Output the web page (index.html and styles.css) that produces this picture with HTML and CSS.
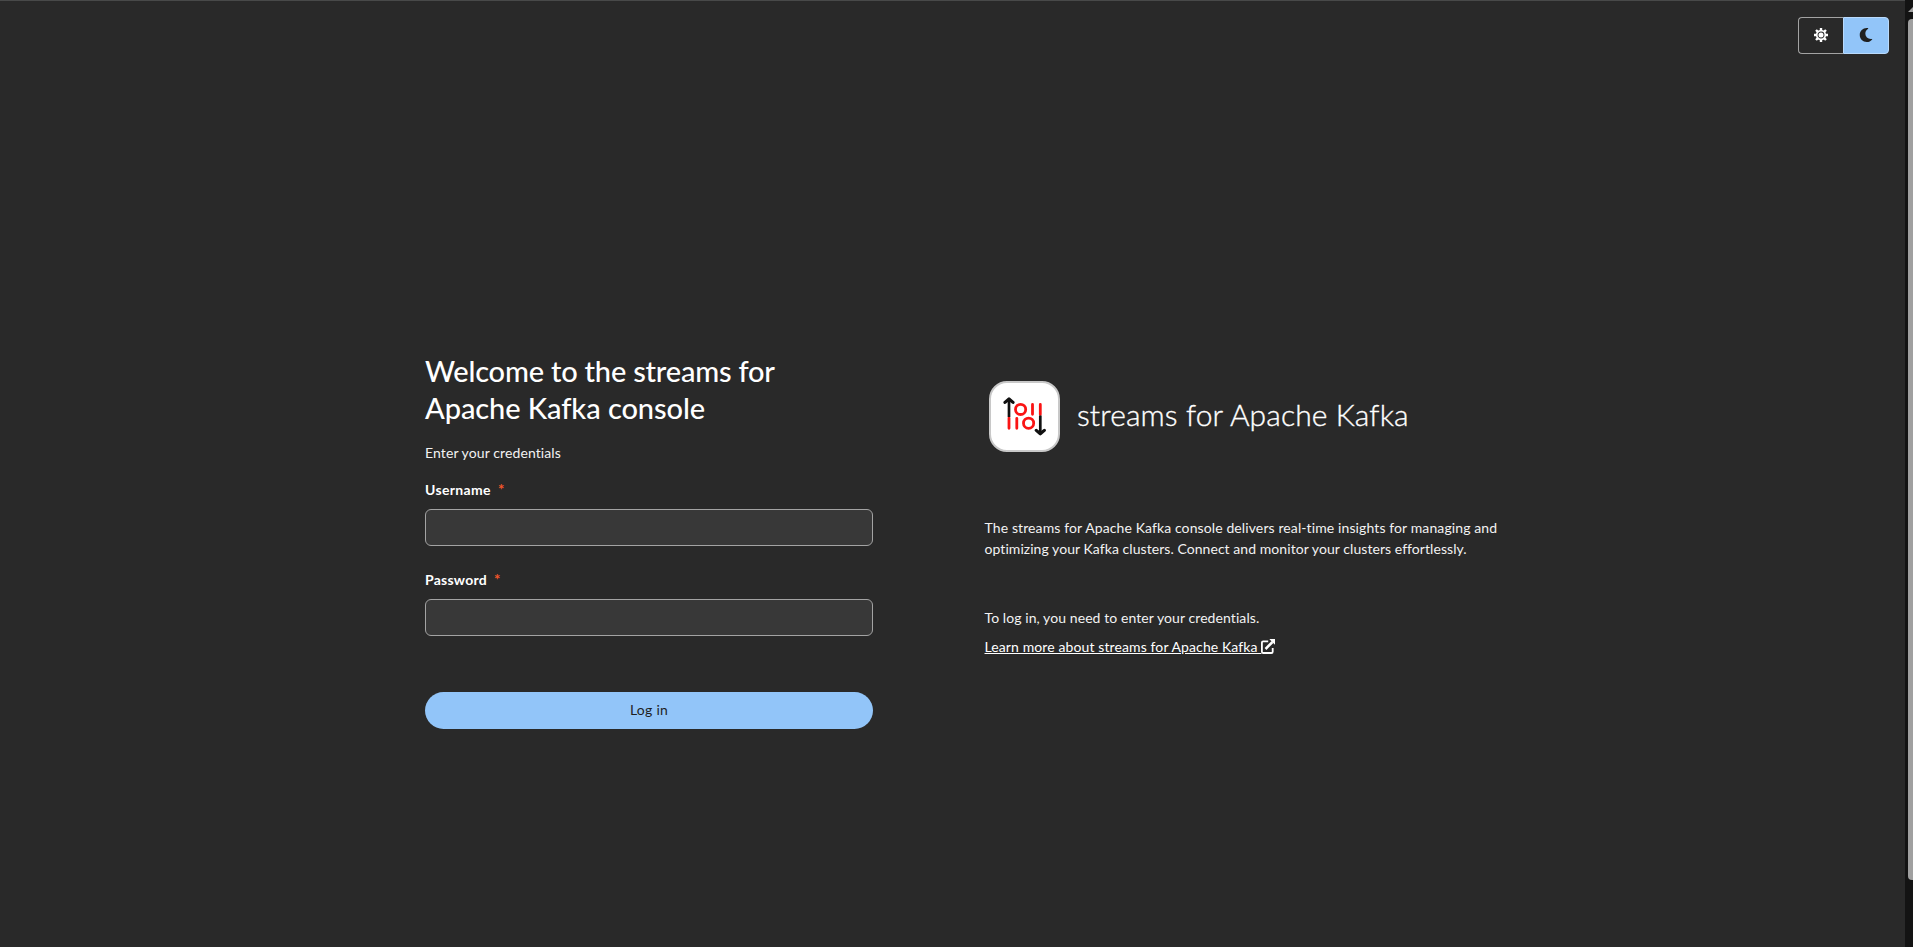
FILE: index.html
```html
<!DOCTYPE html>
<html lang="en">
<head>
<meta charset="utf-8">
<title>streams for Apache Kafka console</title>
<link rel="stylesheet" href="styles.css">
</head>
<body>
<div class="page">
  <header class="toolbar">
    <div class="theme-toggle">
      <button class="toggle-item" aria-label="Light theme">
        <svg width="14" height="14" viewBox="0 0 14 14" fill="none">
          <path stroke="#fff" stroke-width="2.4" d="M7 0v2.600M7 11.400V14M0 7h2.600M11.400 7H14M2 2l1.900 1.900M10.100 10.100L12 12M2 12l1.900-1.900M10.100 3.900L12 2"/>
          <circle cx="7" cy="7" r="4.300" stroke="#fff" stroke-width="1.700"/>
          <circle cx="7" cy="7" r="2.500" fill="#fff"/>
        </svg>
      </button>
      <button class="toggle-item selected" aria-label="Dark theme">
        <svg width="14" height="14" viewBox="0 0 512 512" fill="#1f1f1f">
          <path d="M283.211 512c78.962 0 151.079-35.925 198.857-94.792 7.068-8.708-.639-21.43-11.562-19.35-124.203 23.654-238.262-71.576-238.262-196.954 0-72.222 38.662-138.635 101.498-174.394 9.686-5.512 7.25-20.197-3.756-22.23A258.156 258.156 0 0 0 283.211 0c-141.309 0-256 114.511-256 256 0 141.309 114.511 256 256 256z"/>
        </svg>
      </button>
    </div>
  </header>
  <main class="login">
    <form class="login-form">
      <h1 class="title"><span class="title-first">Welcome to the streams for</span><br><span class="title-second">Apache Kafka console</span></h1>
      <p class="hint">Enter your credentials</p>
      <label class="label label-user" for="user">Username<span class="required">*</span></label>
      <input class="field" id="user" type="text">
      <label class="label label-pass" for="pass">Password<span class="required">*</span></label>
      <input class="field" id="pass" type="password">
      <button class="submit" type="button">Log in</button>
    </form>
    <section class="about">
      <div class="brand">
        <svg class="logo" width="71" height="71" viewBox="0 0 71 71" fill="none">
          <rect x="1" y="1" width="69" height="69" rx="17" fill="#fff" stroke="#c8c8c8" stroke-width="2"/>
          <g stroke="#fa1414" stroke-width="2.800" stroke-linecap="round">
            <path d="M20 37V47.300M27.800 37.300v10M43.500 23.500v9.800M51.300 23.500v10"/>
            <circle cx="31.600" cy="28.400" r="5.100"/>
            <circle cx="39.600" cy="42.200" r="5.100"/>
          </g>
          <g stroke="#111" stroke-width="2.700">
            <path d="M20 36V18.500M51.300 34.500v17.500"/>
            <path stroke-width="3.200" stroke-linecap="round" stroke-linejoin="round" d="M16 21.400L20 18l4 3.400M47.300 49.400l4 3.400 4-3.400"/>
          </g>
        </svg>
        <span class="brand-name">streams for Apache Kafka</span>
      </div>
      <p class="description"><span class="desc-first">The streams for Apache Kafka console delivers real-time insights for managing and</span><br><span class="desc-second">optimizing your Kafka clusters. Connect and monitor your clusters effortlessly.</span></p>
      <p class="instructions">To log in, you need to enter your credentials.</p>
      <a class="learn-more" href="#"><span class="learn-text">Learn more about streams for Apache Kafka&nbsp;</span><svg class="external" width="14" height="15" viewBox="0 0 14 15" fill="none" stroke="#fff">
          <path stroke-width="1.800" d="M7.200 2.300H2.200Q.900 2.300.900 3.600v9.100Q.900 14 2.200 14h8.200q1.300 0 1.300-1.300V9"/>
          <path stroke-width="2.500" d="M4.500 10L11.500 3"/>
          <path fill="#fff" stroke="none" d="M8.300 0H14v5.700z"/>
        </svg></a>
    </section>
  </main>
</div>
<div class="scrollbar">
  <svg class="scroll-arrow" width="5" height="19" viewBox="0 0 5 19"><path d="M0 12L5 7v5z" fill="#a0a0a0"/></svg>
  <div class="thumb"></div>
</div>
</body>
</html>
```
FILE: styles.css
```css
* { box-sizing: border-box; }

body {
  margin: 0;
  height: 947px;
  display: flex;
  overflow: hidden;
  background: #292929;
  color: #f2f2f2;
  font: 14px/21px Lato, "Liberation Sans", sans-serif;
}

h1, p { margin: 0; }
button { font: inherit; border: 0; padding: 0; }

.page { flex: 1; border-top: 1px solid #484949; }

.toolbar {
  display: flex;
  justify-content: flex-end;
  padding: 16px 16px 0 0;
}

.theme-toggle {
  display: flex;
  width: 91px;
  height: 37px;
}

.toggle-item {
  display: flex;
  align-items: center;
  justify-content: center;
  width: 45px;
  padding-bottom: 1px;
  border: 1px solid #a3a3a3;
  border-right: 0;
  border-radius: 4px 0 0 4px;
  background: transparent;
}

.toggle-item.selected {
  width: 46px;
  border: 1px solid #b9dafc;
  border-radius: 0 4px 4px 0;
  background: #92c5f9;
}

.login {
  display: grid;
  grid-template-columns: 448px 530px;
  column-gap: 111px;
  padding: 298px 0 0 425px;
}

.login-form { display: flex; flex-direction: column; }

.title {
  color: #fff;
  font-size: 29px;
  font-weight: 500;
  line-height: 37px;
  white-space: nowrap;
}

.title-first { letter-spacing: -0.2px; }
.title-second { letter-spacing: -0.07px; }

.hint { margin-top: 16px; letter-spacing: 0.1px; }

.label {
  display: flex;
  color: #fff;
  font-weight: 700;
  letter-spacing: 0.35px;
}

.label-user { margin-top: 16px; }
.label-pass { margin-top: 23px; letter-spacing: 0.25px; }

.required {
  margin-left: 7px;
  color: #f4562a;
  font-size: 15px;
}

.field {
  height: 37px;
  margin-top: 9px;
  border: 1px solid #a3a3a3;
  border-radius: 6px;
  background: #383838;
  color: #fff;
}

.submit {
  height: 37px;
  margin-top: 56px;
  padding-bottom: 2px;
  border-radius: 19px;
  background: #92c5f9;
  color: #1f1f1f;
  letter-spacing: 0.25px;
}

.about { padding-top: 29px; white-space: nowrap; }

.brand {
  display: flex;
  align-items: center;
  padding-left: 5px;
}

.brand-name {
  margin-left: 17px;
  padding-bottom: 6px;
  color: #fff;
  font-size: 30px;
  font-weight: 300;
  line-height: 40px;
  letter-spacing: 0.12px;
  -webkit-text-stroke: 0.35px #fff;
}

.description { margin-top: 65px; padding-left: 0.5px; }
.desc-first { letter-spacing: 0.11px; }
.desc-second { letter-spacing: 0.06px; }

.instructions { margin-top: 48px; padding-left: 0.5px; letter-spacing: 0.08px; }

.learn-more {
  display: flex;
  align-items: flex-start;
  margin-top: 8px;
  padding-left: 0.5px;
  color: #fff;
  text-decoration: none;
}

.learn-text {
  letter-spacing: 0.11px;
  text-decoration: underline;
  text-underline-offset: 1px;
}

.external { margin-top: 3px; }

.scrollbar {
  width: 8px;
  padding-left: 3px;
  background: #131313;
}

.scroll-arrow { display: block; }

.thumb {
  height: 861px;
  border-radius: 4px 0 0 4px;
  background: #a0a0a0;
}
```
